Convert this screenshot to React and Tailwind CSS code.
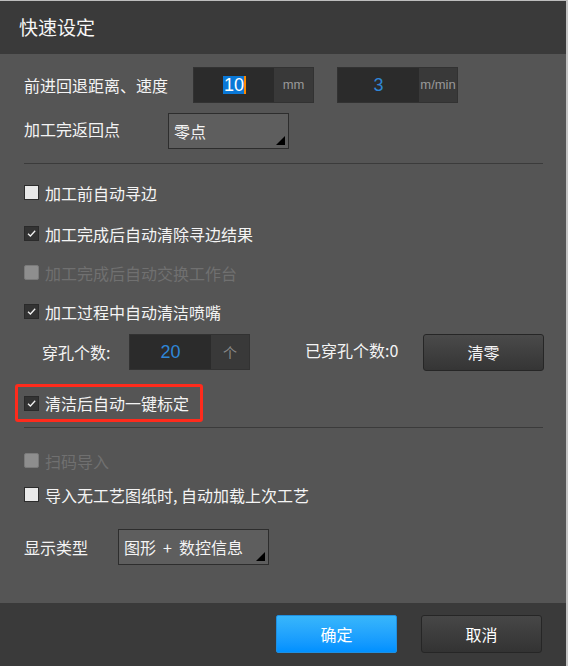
import React from "react";

const FONT = { fontFamily: '"Noto Sans CJK SC", "Noto Sans", sans-serif' };

function Check({ state }) {
  // state: "on" | "off" | "disabled"
  if (state === "disabled") {
    return <span className="inline-block w-[15px] h-[15px] rounded-[2px] bg-[#8e8e8e] border border-[#7a7a7a] shrink-0" />;
  }
  if (state === "off") {
    return <span className="inline-block w-[15px] h-[15px] bg-[#e9e9e9] border border-[#2c2c2c] shrink-0" />;
  }
  return (
    <span className="w-[15px] h-[15px] bg-[#333333] border border-[#2a2a2a] shrink-0 grid place-items-center">
      <svg width="11" height="11" viewBox="0 0 11 11">
        <polyline points="2,5.8 4.4,8 9.2,2.8" fill="none" stroke="#f2f2f2" strokeWidth="1.3" />
      </svg>
    </span>
  );
}

function CheckRow({ state, label, className = "" }) {
  return (
    <div className={`flex items-center h-[39px] gap-[6px] ${className}`}>
      <Check state={state} />
      <span className={`text-[16px] ${state === "disabled" ? "text-[#707070]" : "text-[#f4f4f4]"}`}>{label}</span>
    </div>
  );
}

function Dropdown({ children, w }) {
  return (
    <div className={`relative h-[36px] ${w} bg-[#5e5e5e] border border-[#2d2d2d] flex items-center pl-[5px] text-[16px] text-[#f4f4f4]`}>
      {children}
      <span className="absolute right-[3px] bottom-[3px] w-0 h-0 border-l-[9px] border-l-transparent border-b-[9px] border-b-black" />
    </div>
  );
}

function NumInput({ children, unit, w, unitW }) {
  return (
    <div className={`flex h-[36px] ${w} border border-[#323232] bg-[#2b2b2b]`}>
      <div className="flex-1 flex items-center justify-center">{children}</div>
      <div className={`${unitW} bg-[#393939] flex items-center justify-center text-[13px] text-[#9a9a9a]`} style={{ fontFamily: '"Liberation Sans", "Noto Sans CJK SC", sans-serif' }}>
        {unit}
      </div>
    </div>
  );
}

export default function App() {
  return (
    <div className="w-[568px] h-[666px] flex flex-col bg-[#555555] border-t border-t-[#bdbdbd] border-r-2 border-r-[#c4c4c4]" style={FONT}>
      {/* title */}
      <div className="h-[53px] bg-[#3a3a3a] flex items-center pl-[19px] text-[19px] text-[#f6f6f6]">快速设定</div>

      {/* body */}
      <div className="flex-1 px-[24px] pt-[13px]">
        <div className="flex items-center h-[36px]">
          <span className="w-[169px] text-[16px] text-[#f4f4f4]">前进回退距离、速度</span>
          <NumInput w="w-[121px]" unit="mm" unitW="w-[39px]">
            <span className="relative bg-[#0a78d7] text-white text-[18px] leading-[18px] px-[1px]" style={{ fontFamily: '"Liberation Sans", sans-serif' }}>
              10
              <span className="absolute right-[-1px] top-0 w-[2px] h-full bg-[#ff8a00]" />
            </span>
          </NumInput>
          <div className="w-[23px]" />
          <NumInput w="w-[121px]" unit="m/min" unitW="w-[38px]">
            <span className="text-[#2f86d6] text-[18px]" style={{ fontFamily: '"Liberation Sans", sans-serif' }}>3</span>
          </NumInput>
        </div>

        <div className="flex items-center h-[36px] mt-[10px]">
          <span className="w-[144px] text-[16px] text-[#f4f4f4] -mt-[4px]">加工完返回点</span>
          <Dropdown w="w-[121px]">零点</Dropdown>
        </div>

        <div className="h-px bg-[#3b3b3b] mt-[14px] -mr-[1px]" />

        <div className="mt-[9px]">
          <CheckRow state="off" label="加工前自动寻边" />
          <CheckRow state="on" label="加工完成后自动清除寻边结果" className="mt-[2px]" />
          <CheckRow state="disabled" label="加工完成后自动交换工作台" />
          <CheckRow state="on" label="加工过程中自动清洁喷嘴" />
        </div>

        <div className="flex items-center h-[38px] mt-[2px]">
          <span className="ml-[18px] w-[87px] text-[16px] text-[#f4f4f4]">穿孔个数:</span>
          <div className="flex h-[36px] w-[121px] border border-[#323232] bg-[#2b2b2b]">
            <div className="flex-1 flex items-center justify-center text-[18px] text-[#2f86d6]" style={{ fontFamily: '"Liberation Sans", sans-serif' }}>20</div>
            <div className="w-[38px] bg-[#393939] flex items-center justify-center text-[14px] text-[#8a8a8a]">个</div>
          </div>
          <span className="ml-[55px] text-[16px] text-[#f4f4f4] -mt-[4px]">已穿孔个数:0</span>
          <button className="ml-auto -mr-[2px] w-[121px] h-[37px] rounded-[3px] border border-[#262626] bg-gradient-to-b from-[#4a4a4a] to-[#353535] text-[16px] text-[#f4f4f4]">
            清零
          </button>
        </div>

        <div className="-ml-[9px] mt-[13px] w-[188px] h-[38px] border-[3px] border-[#ff2b1c] rounded-[3px] flex items-center pl-[6px]">
          <div className="flex items-center gap-[6px]">
            <Check state="on" />
            <span className="text-[16px] text-[#f4f4f4]">清洁后自动一键标定</span>
          </div>
        </div>

        <div className="h-px bg-[#3b3b3b] mt-[5px] -mr-[1px]" />

        <div className="mt-[13px]">
          <CheckRow state="disabled" label="扫码导入" />
          <CheckRow state="off" label="导入无工艺图纸时, 自动加载上次工艺" className="-mt-[5px]" />
        </div>

        <div className="flex items-center h-[36px] mt-[15px]">
          <span className="w-[94px] text-[16px] text-[#f4f4f4]">显示类型</span>
          <Dropdown w="w-[151px]">
            <span>图形</span>
            <span className="mx-[7px]">+</span>
            <span>数控信息</span>
          </Dropdown>
        </div>
      </div>

      {/* footer */}
      <div className="h-[63px] bg-[#3a3a3a] flex items-center justify-end gap-[24px] pr-[24px] pb-[1px]">
        <button className="w-[121px] h-[38px] rounded-[2px] border border-[#1f8fe0] bg-gradient-to-b from-[#38b6fb] to-[#0090ff] text-[16px] text-white">
          确定
        </button>
        <button className="w-[121px] h-[38px] rounded-[3px] border border-[#262626] bg-gradient-to-b from-[#474747] to-[#333333] text-[16px] text-white">
          取消
        </button>
      </div>
    </div>
  );
}
